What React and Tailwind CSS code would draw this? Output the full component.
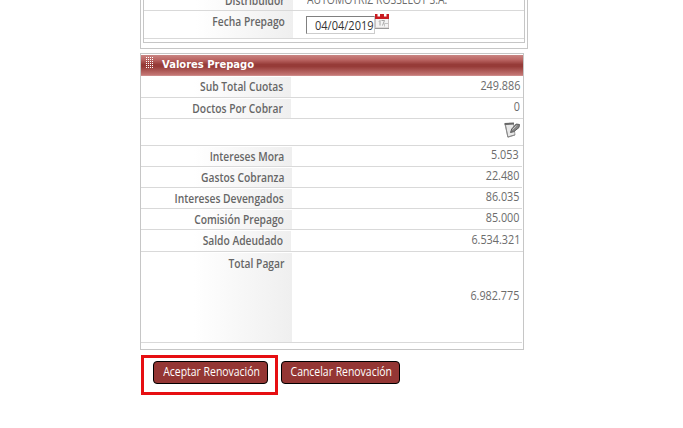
const labelCell = "shrink-0 bg-gradient-to-r from-white from-35% to-[#efefef] text-right font-semibold text-[#666] text-[12px] whitespace-nowrap";
const labelText = "inline-block origin-right scale-x-[0.855]";
const valueText = "inline-block origin-right scale-x-[0.9] text-[12px] text-[#6c6c6c]";

function Row({ label, value, height, labelWidth = "w-[151px]", pad = "pr-[8px]", valuePad = "pr-[3px]", inset = "mr-px", leading = "leading-[19px]", valueLeading = "leading-[17px]" }) {
  return (
    <div className={`flex border-b border-[#d9d9d9] ${height} ${inset}`}>
      <div className={`${labelCell} ${labelWidth} ${pad} ${leading} mt-px`}>
        <span className={labelText}>{label}</span>
      </div>
      <div className={`flex-1 text-right text-[12px] ${valueLeading} ${valuePad}`}>
        <span className={valueText}>{value}</span>
      </div>
    </div>
  );
}

function CalendarIcon() {
  return (
    <svg width="15" height="17" viewBox="0 0 15 17">
      <rect x="0.5" y="2.5" width="13" height="12.5" fill="#f3f3f3" stroke="#c9c3c3" />
      <path d="M0 1h14v5H0z" fill="#c91b20" />
      <path d="M2.5 0h2.5v3.5H2.5zM9 0h2.5v3.5H9z" fill="#fff" />
      <path d="M0 15.5h14" stroke="#999" />
      <path d="M4 8.5l1-1v5M6.5 7.5h3l-2 5" fill="none" stroke="#9c9c9c" strokeWidth="0.9" />
      <path d="M9.5 13.5v-3h3.5" fill="none" stroke="#c4c4c4" />
    </svg>
  );
}

function NoteIcon() {
  return (
    <svg width="16" height="16" viewBox="0 0 16 16">
      <path d="M1 2.5l8.500-1 1.500 11.500-7 2.200z" fill="#e8e8e8" stroke="#a0a0a0" />
      <path d="M0.500 2l9.500-0.600" stroke="#666" strokeWidth="2" />
      <path d="M1.500 3l2.300 12" stroke="#8a8a8a" />
      <path d="M3.700 15l7.300-2.200" stroke="#888" />
      <path d="M6.500 10.500l1.200-3.500 4.500-5 3.300 0.500-0.500 3-5.200 4.200z" fill="#858585" stroke="#555" strokeWidth="0.9" />
      <path d="M8.500 7.500l4-3.800" stroke="#ccc" />
    </svg>
  );
}

function Grip() {
  return (
    <svg width="8" height="12" viewBox="0 0 8 12">
      {[0, 2, 4, 6, 8, 10].map((y) =>
        [0, 2, 4, 6].map((x) => <rect key={`${x}-${y}`} x={x} y={y} width="1" height="1" fill="#fff" />)
      )}
    </svg>
  );
}

const button = "flex h-[23px] items-center justify-center rounded-[4px] border border-black bg-[#943634] text-[12px] text-white whitespace-nowrap pb-px pl-[2px]";

export default function App() {
  return (
    <div className="h-[428px] w-[683px] overflow-hidden bg-white pl-[140px] font-['Open_Sans','Noto_Sans',sans-serif] text-[#6c6c6c]">
      <section className="h-[49px] w-[388px] border border-t-0 border-[#c6c6c6] px-[2px]">
        <div className="h-[43px] border border-t-0 border-[#c6c6c6]">
          <div className="flex h-[11px] items-end overflow-hidden border-b border-[#d9d9d9]">
            <div className={`${labelCell} h-[10px] w-[149px] pr-[8px]`}>
              <div className="-mt-[9px] leading-[20px]"><span className={labelText}>Distribuidor</span></div>
            </div>
            <div className="h-[10px] pl-[14px] text-[12px] whitespace-nowrap">
              <div className="-mt-[10px] leading-[20px]"><span className="inline-block origin-left scale-x-[0.865]">AUTOMOTRIZ ROSSELOT S.A.</span></div>
            </div>
          </div>
          <div className="flex h-[28px] border-b border-[#d9d9d9]">
            <div className={`${labelCell} w-[149px] pr-[8px] leading-[22px]`}><span className={labelText}>Fecha Prepago</span></div>
            <div className="flex items-start pl-[13px]">
              <div className="mt-[5px] h-[18px] w-[69px] border border-[#808080] border-r-[#ccc] border-b-[#ccc] pl-[8px] text-[12px] leading-[17px] text-[#333]">
                <span className="inline-block origin-left scale-x-[0.92]">04/04/2019</span>
              </div>
              <div className="mt-[2px]"><CalendarIcon /></div>
            </div>
          </div>
        </div>
      </section>

      <section className="mt-[4px] h-[297px] w-[384px] border border-[#c6c6c6]">
        <header className="mt-px flex h-[21px] items-start bg-[linear-gradient(#c98583,#bb6664_22%,#963b38_45%,#963b38_55%,#c47674_95%,#d39b9a)] pt-[2px] pl-[5px]">
          <Grip />
          <span className="ml-[8px] font-['DejaVu_Sans'] text-[10px] leading-[16px] font-bold tracking-[-0.02px] text-white">Valores Prepago</span>
        </header>
        <Row label="Sub Total Cuotas" value="249.886" height="h-[22px]" labelWidth="w-[150px]" inset="" leading="leading-[20px]" valueLeading="leading-[19px]" />
        <Row label="Doctos Por Cobrar" value="0" height="h-[21px]" labelWidth="w-[150px]" inset="" />
        <div className="flex h-[27px] justify-end border-b border-[#d9d9d9] pt-[3px] pr-[3px]"><NoteIcon /></div>
        <Row label="Intereses Mora" value="5.053" height="h-[21px]" />
        <Row label="Gastos Cobranza" value="22.480" height="h-[21px]" />
        <Row label="Intereses Devengados" value="86.035" height="h-[21px]" />
        <Row label="Comisión Prepago" value="85.000" height="h-[21px]" />
        <Row label="Saldo Adeudado" value="6.534.321" height="h-[22px]" labelWidth="w-[150px]" inset="" leading="leading-[20px]" valueLeading="leading-[19px]" />
        <div className="mr-px flex h-[91px] border-b border-[#d9d9d9]">
          <div className={`${labelCell} mt-px w-[151px] pr-[8px] leading-[21px]`}><span className={labelText}>Total Pagar</span></div>
          <div className="flex flex-1 items-center justify-end pr-[3px] pb-[2px]">
            <span className={valueText}>6.982.775</span>
          </div>
        </div>
      </section>

      <div className="mt-[5px] flex">
        <div className="ml-px h-[40px] w-[137px] border-[3px] border-[#e60f12] pt-[3px] pl-[9px]">
          <div className={`${button} w-[115px]`}><span className="scale-x-[0.87]">Aceptar Renovación</span></div>
        </div>
        <div className={`${button} mt-[6px] ml-[3px] w-[119px]`}><span className="scale-x-[0.87]">Cancelar Renovación</span></div>
      </div>
    </div>
  );
}
